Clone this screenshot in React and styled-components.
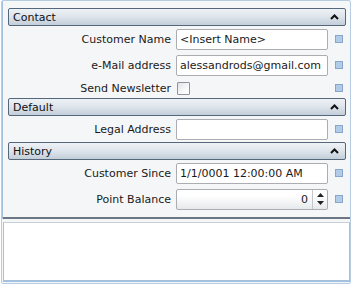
import React from "react";
import styled, { createGlobalStyle } from "styled-components";

const GlobalStyle = createGlobalStyle`
  html, body {
    margin: 0;
    padding: 0;
    background: #ffffff;
  }
  body {
    font-family: "DejaVu Sans", Verdana, sans-serif;
    font-size: 11px;
    color: #1a1a1a;
  }
`;

const Frame = styled.div`
  box-sizing: border-box;
  width: 350px;
  height: 284px;
  margin: 0 0 0 1px;
  padding-bottom: 1px;
  border: 1px solid #b6cce3;
  border-radius: 2px;
  background: #f5f6f7;
  display: flex;
  flex-direction: column;
  overflow: hidden;
`;

const Grid = styled.div`
  box-sizing: border-box;
  height: 218px;
  display: flex;
  flex-direction: column;
  padding: 7px 4px 0 5px;
  border-left: 1px solid #a3c0df;
`;

const Header = styled.div`
  box-sizing: border-box;
  height: 18px;
  flex-shrink: 0;
  display: flex;
  align-items: center;
  justify-content: space-between;
  padding: 0 6px 0 4px;
  border: 1px solid #55677a;
  border-radius: 2px;
  background: linear-gradient(#eef2f6 0%, #dde4eb 50%, #c3ced9 100%);
  color: #111;
  font-size: 11px;
`;

const Row = styled.div`
  display: flex;
  align-items: center;
  flex-shrink: 0;
  height: ${(p) => p.$h || 26}px;
`;

const Label = styled.div`
  width: 163px;
  padding-right: 5px;
  text-align: right;
  white-space: nowrap;
`;

const Field = styled.div`
  box-sizing: border-box;
  width: 152px;
  height: 21px;
  border: 1px solid #abadb3;
  border-radius: 2px;
  background: ${(p) => (p.$shaded ? "linear-gradient(#ffffff 30%, #e6e9ec 100%)" : "#ffffff")};
  display: flex;
  align-items: center;
  padding: 0 3px;
  white-space: nowrap;
  overflow: hidden;
`;

const Check = styled.div`
  box-sizing: border-box;
  width: 13px;
  height: 13px;
  margin-left: 1px;
  border: 1px solid #8e959c;
  border-radius: 1px;
  background: linear-gradient(135deg, #dfe3e7 0%, #ffffff 80%);
`;

const Spacer = styled.div`
  width: 152px;
`;

const Marker = styled.div`
  box-sizing: border-box;
  width: 8px;
  height: 8px;
  margin-left: 7px;
  border: 1px solid #86a7cb;
  background: #b3cbe6;
`;

const SpinValue = styled.span`
  flex: 1;
  text-align: right;
  padding-right: 4px;
`;

const Spinner = styled.div`
  align-self: stretch;
  width: 14px;
  margin-right: -3px;
  border-left: 1px solid #c3c7cc;
  display: flex;
  flex-direction: column;
  align-items: center;
  justify-content: space-around;
  padding: 2px 0;
`;

const Divider = styled.div`
  margin: auto -4px 0 -5px;
  height: 2px;
  flex-shrink: 0;
  background: #6b7783;
`;

const Description = styled.div`
  box-sizing: border-box;
  height: 60px;
  margin: 3px 0 0 1px;
  background: #ffffff;
  border-top: 1px solid #c9cfd6;
  border-left: 1px solid #a3c0df;
  border-bottom: 2px solid #a3c0df;
  border-right: 1px solid #a3c0df;
`;

const Chevron = () => (
  <svg width="9" height="6" viewBox="0 0 9 6">
    <path d="M1 5 L4.5 1.5 L8 5" stroke="#111" strokeWidth="2" fill="none" />
  </svg>
);

const Arrow = ({ up }) => (
  <svg width="7" height="4" viewBox="0 0 7 4">
    <path d={up ? "M0 4 L3.5 0 L7 4 Z" : "M0 0 L3.5 4 L7 0 Z"} fill="#222" />
  </svg>
);

const Category = ({ title, children }) => (
  <>
    <Header>
      <span>{title}</span>
      <Chevron />
    </Header>
    {children}
  </>
);

const Property = ({ label, children, h }) => (
  <Row $h={h}>
    <Label>{label}</Label>
    {children}
    <Marker />
  </Row>
);

const App = () => {
  return (
    <>
      <GlobalStyle />
      <Frame>
        <Grid>
          <Category title="Contact">
            <Property label="Customer Name">
              <Field>&lt;Insert Name&gt;</Field>
            </Property>
            <Property label="e-Mail address">
              <Field>alessandrods@gmail.com</Field>
            </Property>
            <Property label="Send Newsletter" h={20}>
              <Spacer>
                <Check />
              </Spacer>
            </Property>
          </Category>
          <Category title="Default">
            <Property label="Legal Address">
              <Field />
            </Property>
          </Category>
          <Category title="History">
            <Property label="Customer Since">
              <Field>1/1/0001 12:00:00 AM</Field>
            </Property>
            <Property label="Point Balance">
              <Field $shaded>
                <SpinValue>0</SpinValue>
                <Spinner>
                  <Arrow up />
                  <Arrow />
                </Spinner>
              </Field>
            </Property>
          </Category>
          <Divider />
        </Grid>
        <Description />
      </Frame>
    </>
  );
};

export default App;
